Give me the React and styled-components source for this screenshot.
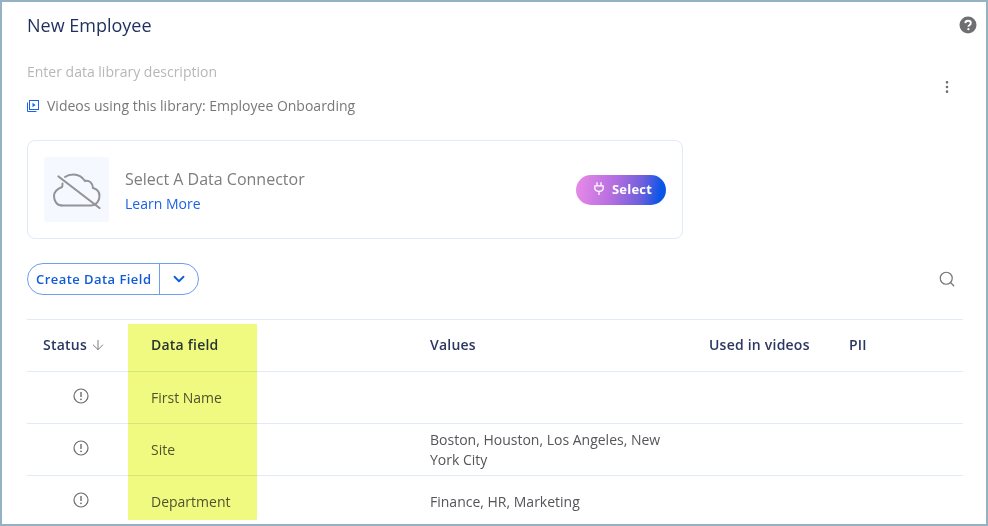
import React from "react";
import styled, { createGlobalStyle } from "styled-components";
import { ArrowDown, ChevronDown, Search, EllipsisVertical } from "lucide-react";

const Global = createGlobalStyle`
  html, body { margin: 0; padding: 0; background: #fff; }
  body { font-family: "Open Sans", "Noto Sans", sans-serif; }
  * { box-sizing: border-box; }
`;

const Frame = styled.div`
  position: relative;
  width: 988px;
  height: 526px;
  border: 2px solid #93b3c5;
  background: #fff;
  overflow: hidden;
  padding: 0 23px 0 25px;
`;

const Title = styled.h1`
  margin: 0;
  padding-top: 11px;
  height: 38px;
  font-size: 18px;
  line-height: 24px;
  font-weight: 400;
  color: #1f2f5f;
`;

const HeaderAction = styled.div`
  position: absolute;
  top: ${(p) => p.$top}px;
  right: ${(p) => p.$right}px;
  display: flex;
  color: #6f6f72;
`;

const Description = styled.div`
  margin-top: 22px;
  font-size: 14px;
  line-height: 20px;
  color: #b7b7b9;
`;

const VideoLine = styled.div`
  display: flex;
  align-items: center;
  gap: 8px;
  margin-top: 14px;
  font-size: 14px;
  line-height: 20px;
  color: #78787b;
`;

const ConnectorCard = styled.div`
  display: flex;
  align-items: center;
  width: 656px;
  height: 99px;
  margin-top: 24px;
  padding: 0 16px;
  border: 1px solid #e0eafa;
  border-radius: 8px;
`;

const IconTile = styled.div`
  display: flex;
  align-items: center;
  justify-content: center;
  width: 65px;
  height: 65px;
  border-radius: 3px;
  background: #f5f8fe;
`;

const ConnectorText = styled.div`
  flex: 1;
  margin-left: 16px;
  padding-top: 2px;
`;

const ConnectorTitle = styled.div`
  font-size: 16px;
  line-height: 24px;
  color: #7d7d80;
`;

const LearnMore = styled.a`
  display: block;
  margin-top: 3px;
  font-size: 14px;
  line-height: 20px;
  color: #1a62e6;
`;

const SelectButton = styled.button`
  display: flex;
  align-items: center;
  justify-content: center;
  gap: 8px;
  width: 90px;
  height: 30px;
  padding: 0 0 2px 4px;
  border: 0;
  border-radius: 15px;
  font-family: inherit;
  font-size: 13px;
  font-weight: 700;
  letter-spacing: 0.2px;
  color: #fff;
  background: linear-gradient(100deg, #ea8be8 0%, #b76fe0 40%, #6d5fdc 72%, #0a55e6 92%);
`;

const Toolbar = styled.div`
  display: flex;
  align-items: center;
  justify-content: space-between;
  margin-top: 24px;
  height: 32px;
  padding-right: 7px;
  color: #747477;
`;

const SplitButton = styled.div`
  display: flex;
  align-items: stretch;
  height: 32px;
  border: 1px solid #6f9df0;
  border-radius: 16px;
  color: #0f5bd8;
`;

const SplitLabel = styled.div`
  display: flex;
  align-items: center;
  width: 132px;
  padding-left: 8px;
  font-size: 13px;
  font-weight: 600;
  letter-spacing: 0.45px;
  border-right: 1px solid #6f9df0;
`;

const SplitCaret = styled.div`
  display: flex;
  align-items: center;
  justify-content: center;
  width: 38px;
`;

const Table = styled.div`
  margin-top: 24px;
  width: 936px;
  border-top: 1px solid #e2eaf7;
`;

const Row = styled.div`
  display: grid;
  grid-template-columns: 108px 279px 279px 140px 130px;
  height: 52px;
  border-bottom: 1px solid #e2eaf7;
  align-items: center;
`;

const HeadCell = styled.div`
  display: flex;
  align-items: center;
  gap: 3px;
  padding: 0 0 2px 16px;
  font-size: 14px;
  font-weight: 600;
  letter-spacing: 0.22px;
  line-height: 20px;
  color: #2a3760;
`;

const Cell = styled.div`
  padding: 0 16px;
  font-size: 14px;
  line-height: 20px;
  color: #55555a;
`;

const StatusCell = styled.div`
  display: flex;
  justify-content: center;
  color: #6b6b6f;
  position: relative;
  top: -2px;
`;

const Highlight = styled.div`
  position: absolute;
  left: 126px;
  top: 322px;
  width: 129px;
  height: 196px;
  background: #f0fa80;
  mix-blend-mode: multiply;
  pointer-events: none;
`;

const VideoIcon = () => (
  <svg width="12" height="12" viewBox="0 0 12 12" fill="none">
    <rect x="2.5" y="0.5" width="9" height="9" stroke="#1a62e6" />
    <path d="M0.5 2.5V11.5H9.5" stroke="#1a62e6" />
    <path d="M5.5 2.8L8.5 5L5.5 7.2Z" fill="#1a62e6" />
  </svg>
);

const HelpIcon = () => (
  <svg width="18" height="18" viewBox="0 0 18 18">
    <circle cx="9" cy="9" r="8.5" fill="#6f6f72" />
    <path
      d="M6.3 7.1C6.4 5.6 7.5 4.7 9 4.7c1.6 0 2.8.9 2.8 2.3 0 1.1-.6 1.7-1.4 2.2-.7.4-1 .8-1 1.5"
      fill="none"
      stroke="#fff"
      strokeWidth="1.9"
    />
    <circle cx="9.4" cy="13.2" r="1.15" fill="#fff" />
  </svg>
);

const CloudOffIcon = () => (
  <svg width="48" height="38" viewBox="0 0 48 38" fill="none" stroke="#949497" strokeWidth="2" strokeLinecap="round">
    <path d="M8.5 34.5H38C43 34.5 46.5 30 46.5 25C46.5 21 44 18 40 17C40 12 36 9 32 10C29 5.5 24.5 3.5 20.5 3.5C17 3.5 14 4.5 12 6" />
    <path d="M9.5 12.5C9.5 14 9.5 15 9 16C4 18 1 21 1 25C1 30 4 34.5 8.5 34.5" />
    <path d="M5.5 5.5L46.5 37" strokeWidth="2.2" />
  </svg>
);

const PlugIcon = () => (
  <svg width="10" height="13" viewBox="0 0 10 13" fill="none" stroke="#fff" strokeWidth="1.3" strokeLinecap="round" strokeLinejoin="round">
    <path d="M3 0.7V3.6M7 0.7V3.6" />
    <path d="M0.8 3.8H9.2V6C9.2 8 7.4 9.4 5 9.4C2.6 9.4 0.8 8 0.8 6Z" />
    <path d="M5 9.6V12.4" />
  </svg>
);

const AlertIcon = () => (
  <svg width="16" height="16" viewBox="0 0 16 16" fill="none">
    <circle cx="8" cy="8" r="7" stroke="currentColor" strokeWidth="1.2" />
    <path d="M8 4V9" stroke="currentColor" strokeWidth="1.4" />
    <circle cx="8" cy="11.3" r="0.9" fill="currentColor" />
  </svg>
);

const rows = [
  { name: "First Name", values: "" },
  { name: "Site", values: "Boston, Houston, Los Angeles, New York City" },
  { name: "Department", values: "Finance, HR, Marketing" },
];

export default function App() {
  return (
    <Frame>
      <Global />
      <Title>New Employee</Title>
      <HeaderAction $top={14} $right={9}>
        <HelpIcon />
      </HeaderAction>
      <HeaderAction $top={77} $right={31}>
        <EllipsisVertical size={16} strokeWidth={2} />
      </HeaderAction>
      <Description>Enter data library description</Description>
      <VideoLine>
        <VideoIcon />
        Videos using this library: Employee Onboarding
      </VideoLine>
      <ConnectorCard>
        <IconTile>
          <CloudOffIcon />
        </IconTile>
        <ConnectorText>
          <ConnectorTitle>Select A Data Connector</ConnectorTitle>
          <LearnMore>Learn More</LearnMore>
        </ConnectorText>
        <SelectButton>
          <PlugIcon />
          Select
        </SelectButton>
      </ConnectorCard>
      <Toolbar>
        <SplitButton>
          <SplitLabel>Create Data Field</SplitLabel>
          <SplitCaret>
            <ChevronDown size={18} strokeWidth={2.4} />
          </SplitCaret>
        </SplitButton>
        <Search size={18} strokeWidth={1.6} />
      </Toolbar>
      <Table>
        <Row>
          <HeadCell>
            Status <ArrowDown size={16} strokeWidth={1.5} color="#7c7c7f" />
          </HeadCell>
          <HeadCell>Data field</HeadCell>
          <HeadCell>Values</HeadCell>
          <HeadCell>Used in videos</HeadCell>
          <HeadCell>PII</HeadCell>
        </Row>
        {rows.map((r) => (
          <Row key={r.name}>
            <StatusCell>
              <AlertIcon />
            </StatusCell>
            <Cell>{r.name}</Cell>
            <Cell>{r.values}</Cell>
            <Cell />
            <Cell />
          </Row>
        ))}
      </Table>
      <Highlight />
    </Frame>
  );
}
